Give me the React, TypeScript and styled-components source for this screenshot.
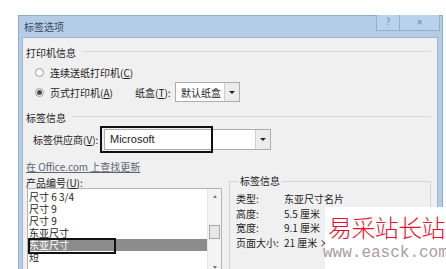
import { Fragment } from "react";
import styled, { createGlobalStyle } from "styled-components";

const GlobalStyle = createGlobalStyle`
  html, body {
    margin: 0;
    padding: 0;
    background: #fff;
    overflow: hidden;
  }
  body {
    font-family: "Noto Sans CJK SC", "Liberation Sans", sans-serif;
    font-size: 10px;
    color: #1e1e1e;
  }
`;

const Page = styled.div`
  position: relative;
  width: 446px;
  height: 269px;
  padding: 15px 0 0 18px;
  box-sizing: border-box;
`;

const Window = styled.div`
  width: 425px;
  height: 260px;
  background: #b3cde9;
  border: 1px solid #8fabc9;
  border-bottom: none;
  box-sizing: border-box;
  padding: 0 4px 0 3px;
  display: flex;
  flex-direction: column;
`;

const TitleBar = styled.div`
  height: 21px;
  display: flex;
  align-items: center;
  justify-content: space-between;
  padding-left: 2px;
  color: #3a4a5c;
  font-size: 10px;
`;

const TitleButtons = styled.div`
  display: flex;
  align-self: flex-start;
  margin-top: -1px;
  margin-right: -2px;
`;

const TitleButton = styled.div<{ $w: number }>`
  width: ${(p) => p.$w}px;
  height: 15px;
  border: 1px solid #93afcd;
  border-top: none;
  margin-left: -1px;
  background: #b9d2ec;
  display: flex;
  align-items: center;
  justify-content: center;
  color: #6f88a4;
  font-family: "DejaVu Sans", sans-serif;
  font-size: 8px;
`;

const Panel = styled.div`
  flex: 1;
  background: #f0f0f0;
  border: 1px solid #a3b6cb;
  border-bottom: none;
  padding: 7px 6px 0 3px;
  display: flex;
  flex-direction: column;
`;

const SectionHeader = styled.div<{ $mt?: number }>`
  display: flex;
  align-items: center;
  height: 14px;
  margin-top: ${(p) => p.$mt ?? 0}px;
  gap: 6px;
  &::after {
    content: "";
    flex: 1;
    height: 1px;
    background: #dadada;
    margin-top: -1px;
  }
`;

const Row = styled.div<{ $h: number; $mt?: number; $pl?: number }>`
  display: flex;
  align-items: center;
  height: ${(p) => p.$h}px;
  margin-top: ${(p) => p.$mt ?? 0}px;
  padding-left: ${(p) => p.$pl ?? 0}px;
  position: relative;
`;

const Radio = styled.span<{ $checked?: boolean }>`
  width: 9px;
  height: 9px;
  border-radius: 50%;
  border: 1px solid #9a9a9a;
  background: #fdfdfd;
  box-sizing: border-box;
  display: flex;
  align-items: center;
  justify-content: center;
  margin-right: 6px;
  &::after {
    content: "";
    display: ${(p) => (p.$checked ? "block" : "none")};
    width: 5px;
    height: 5px;
    border-radius: 50%;
    background: #4a4a4a;
  }
`;

const Label = styled.span<{ $w?: number }>`
  display: inline-block;
  width: ${(p) => (p.$w ? `${p.$w}px` : "auto")};
  white-space: nowrap;
`;

const Select = styled.div<{ $w: number; $h: number }>`
  width: ${(p) => p.$w}px;
  height: ${(p) => p.$h}px;
  box-sizing: border-box;
  border: 1px solid #adadad;
  background: #fff;
  display: flex;
  align-items: center;
`;

const SelectText = styled.span<{ $latin?: boolean }>`
  flex: 1;
  padding-left: 5px;
  font-family: ${(p) =>
    p.$latin ? `"Liberation Sans", sans-serif` : `"Noto Sans CJK SC", sans-serif`};
  font-size: ${(p) => (p.$latin ? 11 : 10)}px;
`;

const DropButton = styled.span`
  width: 14px;
  align-self: stretch;
  border-left: 1px solid #cfcfcf;
  background: #ececec;
  display: flex;
  align-items: center;
  justify-content: center;
  &::after {
    content: "";
    border-left: 3px solid transparent;
    border-right: 3px solid transparent;
    border-top: 3px solid #222;
  }
`;

const Highlight = styled.div<{ $l: number; $t: number; $w: number; $h: number }>`
  position: absolute;
  left: ${(p) => p.$l}px;
  top: ${(p) => p.$t}px;
  width: ${(p) => p.$w}px;
  height: ${(p) => p.$h}px;
  border: 2px solid #111;
  box-sizing: border-box;
  pointer-events: none;
`;

const Link = styled.a`
  color: #5d6570;
  text-decoration: underline;
  font-size: 10px;
  height: 14px;
  margin-top: 9px;
  display: flex;
  align-items: center;
  font-family: "Noto Sans CJK SC", "Liberation Sans", sans-serif;
`;

const Bottom = styled.div`
  display: flex;
  gap: 7px;
  margin-top: 2px;
  flex: 1;
  min-height: 0;
`;

const LeftCol = styled.div`
  width: 196px;
  display: flex;
  flex-direction: column;
`;

const ListBox = styled.div`
  margin-top: -1px;
  margin-left: 1px;
  height: 80px;
  border: 1px solid #b4b4b4;
  background: #fff;
  display: flex;
  overflow: hidden;
`;

const Items = styled.div`
  flex: 1;
  padding-top: 2px;
`;

const Item = styled.div<{ $selected?: boolean }>`
  height: 12px;
  line-height: 12px;
  padding-left: 1px;
  position: relative;
  background: ${(p) => (p.$selected ? "#8c8c8c" : "transparent")};
  color: ${(p) => (p.$selected ? "#fff" : "#1e1e1e")};
  white-space: nowrap;
`;

const ScrollBar = styled.div`
  width: 14px;
  background: #f4f4f4;
  border-left: 1px solid #e6e6e6;
  display: flex;
  flex-direction: column;
  align-items: center;
  padding-top: 6px;
  box-sizing: border-box;
`;

const Arrow = styled.span<{ $up?: boolean }>`
  border-left: 2px solid transparent;
  border-right: 2px solid transparent;
  ${(p) =>
    p.$up ? "border-bottom: 3px solid #7a7a7a;" : "border-top: 3px solid #7a7a7a;"}
`;

const Thumb = styled.span`
  width: 11px;
  height: 14px;
  margin-top: 27px;
  border: 1px solid #a8a8a8;
  box-sizing: border-box;
  background: #e8e8e8;
`;

const ScrollSpacer = styled.span`
  flex: 1;
`;

const InfoBox = styled.fieldset`
  flex: 1;
  margin: 0;
  padding: 4px 0 0 6px;
  border: 1px solid #d4d4d4;
  border-bottom: none;
  min-width: 0;
  legend {
    padding: 0 2px;
    margin-left: 2px;
    font-size: 10px;
    line-height: 12px;
  }
`;

const InfoGrid = styled.div`
  display: grid;
  grid-template-columns: 48px 1fr;
  grid-auto-rows: 14.7px;
  align-items: center;
`;

const Watermark = styled.div`
  position: absolute;
  left: 325px;
  top: 207px;
  right: 0;
  bottom: 0;
  background: #fff;
  display: flex;
  flex-direction: column;
  align-items: flex-start;
  padding: 5px 0 0 3px;
`;

const WaterTitle = styled.div`
  color: #e8102a;
  font-family: "Noto Sans CJK SC", serif;
  font-weight: 300;
  font-size: 24px;
  letter-spacing: -0.6px;
  line-height: 30px;
  white-space: nowrap;
`;

const WaterUrl = styled.div`
  color: #a99ba6;
  font-family: "Liberation Mono", monospace;
  font-size: 16px;
  line-height: 18px;
  margin: 2px 0 0 -5px;
  white-space: nowrap;
`;

const items = ["尺寸 6 3/4", "尺寸 9", "尺寸 9", "东亚尺寸", "东亚尺寸", "短"];

const info: [string, string][] = [
  ["类型:", "东亚尺寸名片"],
  ["高度:", "5.5 厘米"],
  ["宽度:", "9.1 厘米"],
  ["页面大小:", "21 厘米 × 29.7 厘米"],
];

export default function App() {
  return (
    <>
      <GlobalStyle />
      <Page>
        <Window>
          <TitleBar>
            <span>标签选项</span>
            <TitleButtons>
              <TitleButton $w={22}>?</TitleButton>
              <TitleButton $w={39}>✕</TitleButton>
            </TitleButtons>
          </TitleBar>
          <Panel>
            <SectionHeader>打印机信息</SectionHeader>
            <Row $h={20} $mt={3} $pl={9}>
              <Radio />
              <Label>
                连续送纸打印机(<u>C</u>)
              </Label>
            </Row>
            <Row $h={20} $pl={9}>
              <Radio $checked />
              <Label $w={85}>
                页式打印机(<u>A</u>)
              </Label>
              <Label $w={40}>
                纸盒(<u>T</u>):
              </Label>
              <Select $w={65} $h={20}>
                <SelectText>默认纸盒</SelectText>
                <DropButton />
              </Select>
            </Row>
            <SectionHeader $mt={8}>标签信息</SectionHeader>
            <Row $h={22} $mt={4} $pl={7}>
              <Label $w={71}>
                标签供应商(<u>V</u>):
              </Label>
              <Select $w={167} $h={21}>
                <SelectText $latin>Microsoft</SelectText>
                <DropButton />
              </Select>
              <Highlight $l={74} $t={-2} $w={113} $h={27} />
            </Row>
            <Link>在 Office.com 上查找更新</Link>
            <Bottom>
              <LeftCol>
                <Row $h={14}>
                  产品编号(<u>U</u>):
                </Row>
                <ListBox>
                  <Items>
                    {items.map((t, i) => (
                      <Item key={i} $selected={i === 4}>
                        {t}
                        {i === 4 && <Highlight $l={0} $t={-1} $w={88} $h={16} />}
                      </Item>
                    ))}
                  </Items>
                  <ScrollBar>
                    <Arrow $up />
                    <Thumb />
                    <ScrollSpacer />
                    <Arrow />
                  </ScrollBar>
                </ListBox>
              </LeftCol>
              <InfoBox>
                <legend>标签信息</legend>
                <InfoGrid>
                  {info.map(([k, v]) => (
                    <Fragment key={k}>
                      <span>{k}</span>
                      <span>{v}</span>
                    </Fragment>
                  ))}
                </InfoGrid>
              </InfoBox>
            </Bottom>
          </Panel>
        </Window>
        <Watermark>
          <WaterTitle>易采站长站</WaterTitle>
          <WaterUrl>www.easck.com</WaterUrl>
        </Watermark>
      </Page>
    </>
  );
}
